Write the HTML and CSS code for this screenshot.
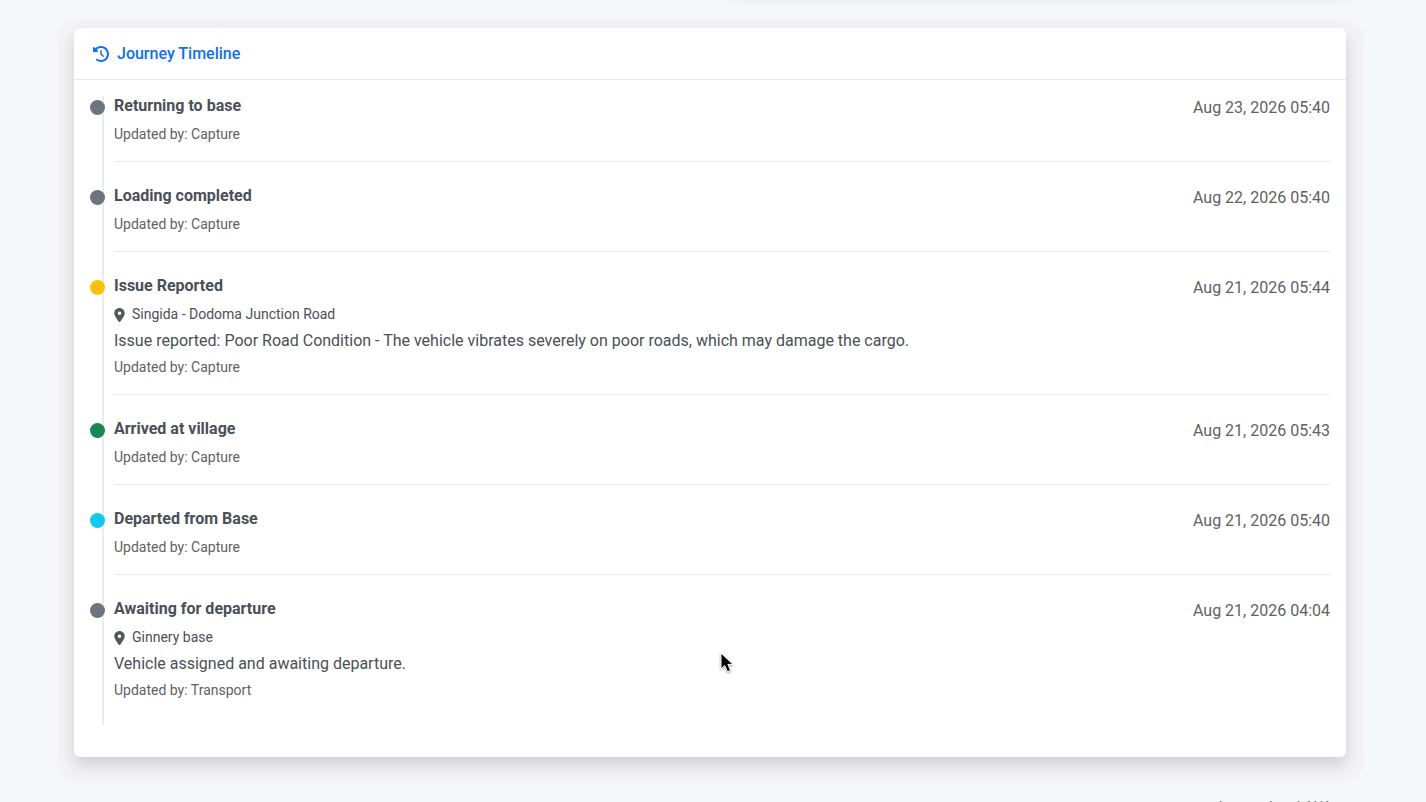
FILE: index.html
```html
<!DOCTYPE html>
<html lang="en">
  <head>
    <meta charset="utf-8" />
    <title>Journey Timeline</title>
    <link rel="stylesheet" href="styles.css">
  </head>
  <body>
    <!-- shared map pin icon -->
    <svg class="sprite" width="0" height="0" aria-hidden="true">
      <symbol id="pin" viewBox="0 0 384 512">
        <path d="M215.700 499.200C267 435 384 279.400 384 192C384 86 298 0 192 0S0 86 0 192c0 87.400 117 243 168.300 307.200c12.300 15.300 35.100 15.300 47.400 0zM192 128a64 64 0 1 1 0 128a64 64 0 1 1 0-128z" />
      </symbol>
    </svg>

    <main class="page">
      <div class="summary">
        <div></div>
        <div class="card summary-card"></div>
      </div>

      <section class="card">
        <div class="card-header">
          <svg class="icon" viewBox="0 0 512 512" aria-hidden="true">
            <path d="M75 75L41 41C25.900 25.900 0 36.600 0 57.900V168c0 13.300 10.700 24 24 24h110.100c21.400 0 32.100-25.900 17-41l-30.800-30.800C155 85.500 203 64 256 64c106 0 192 86 192 192s-86 192-192 192c-40.800 0-78.600-12.700-109.700-34.400c-14.500-10.100-34.400-6.600-44.600 7.900s-6.600 34.400 7.900 44.600C151.200 495 201.700 512 256 512c141.400 0 256-114.600 256-256S397.400 0 256 0C185.300 0 121.300 28.700 75 75zm181 53c-13.300 0-24 10.700-24 24v104c0 6.400 2.500 12.500 7 17l72 72c9.400 9.400 24.600 9.400 33.900 0s9.400-24.600 0-33.900l-65-65V152c0-13.300-10.700-24-24-24z" />
          </svg>
          <h1 class="card-title">Journey Timeline</h1>
        </div>

        <div class="card-body">
          <ul class="timeline">
            <li class="timeline-item">
              <span class="dot"></span>
              <div class="details">
                <h2 class="status">Returning to base</h2>
                <p class="small">Updated by: Capture</p>
              </div>
              <time class="date">Aug 23, 2026 05:40</time>
            </li>
            <li class="timeline-item">
              <span class="dot"></span>
              <div class="details">
                <h2 class="status">Loading completed</h2>
                <p class="small">Updated by: Capture</p>
              </div>
              <time class="date">Aug 22, 2026 05:40</time>
            </li>
            <li class="timeline-item">
              <span class="dot dot-warning"></span>
              <div class="details">
                <h2 class="status">Issue Reported</h2>
                <p class="small location"><svg class="pin"><use href="#pin" /></svg>Singida - Dodoma Junction Road</p>
                <p class="note">Issue reported: Poor Road Condition - The vehicle vibrates severely on poor roads, which may damage the cargo.</p>
                <p class="small">Updated by: Capture</p>
              </div>
              <time class="date">Aug 21, 2026 05:44</time>
            </li>
            <li class="timeline-item">
              <span class="dot dot-success"></span>
              <div class="details">
                <h2 class="status">Arrived at village</h2>
                <p class="small">Updated by: Capture</p>
              </div>
              <time class="date">Aug 21, 2026 05:43</time>
            </li>
            <li class="timeline-item">
              <span class="dot dot-info"></span>
              <div class="details">
                <h2 class="status">Departed from Base</h2>
                <p class="small">Updated by: Capture</p>
              </div>
              <time class="date">Aug 21, 2026 05:40</time>
            </li>
            <li class="timeline-item">
              <span class="dot"></span>
              <div class="details">
                <h2 class="status">Awaiting for departure</h2>
                <p class="small location"><svg class="pin"><use href="#pin" /></svg>Ginnery base</p>
                <p class="note">Vehicle assigned and awaiting departure.</p>
                <p class="small">Updated by: Transport</p>
              </div>
              <time class="date">Aug 21, 2026 04:04</time>
            </li>
          </ul>
        </div>
      </section>

      <footer class="footer small">Last updated: N/A</footer>
    </main>

    <svg class="cursor" viewBox="0 0 14 22" aria-hidden="true">
      <path d="M1 1V17L4.700 13.600L7.500 19.800L10.600 18.400L7.900 12.400H13Z" />
    </svg>
  </body>
</html>
```
FILE: styles.css
```css
* {
  box-sizing: border-box;
}

body {
  font-family: Roboto, sans-serif;
  font-size: 16px;
  line-height: 24px;
  margin: 0;
  height: 100vh;
  overflow: hidden;
  background-color: #f4f8f9;
  color: #495057;
}

h1,
h2,
p,
ul {
  margin: 0;
  padding: 0;
}

.sprite {
  display: none;
}

.page {
  display: flex;
  flex-direction: column;
  padding: 0 80px 0 74px;
  margin-top: -60px;
}

.summary {
  display: grid;
  grid-template-columns: 1fr 1fr;
  gap: 48px;
  margin-bottom: 48px;
}

.summary-card {
  height: 40px;
}

.card {
  background-color: #fff;
  border-radius: 6px;
  box-shadow: 0 8px 16px rgba(0, 0, 0, 0.15), 0 8px 0 17px #f3f3f7;
}

.card-header {
  display: flex;
  align-items: center;
  gap: 8px;
  padding: 16px 19px;
  border-bottom: 1px solid #e6e7e9;
  color: #0d6efd;
}

.icon {
  width: 16px;
  height: 16px;
  fill: currentColor;
}

.card-title {
  font-size: 16px;
  line-height: 19px;
  font-weight: 500;
}

.card-body {
  padding: 16px 16px 32px;
}

.timeline {
  position: relative;
  list-style: none;
}

.timeline::before {
  content: "";
  position: absolute;
  top: 0;
  bottom: 0;
  left: 12px;
  width: 2px;
  background-color: #e9ecef;
}

.timeline-item {
  position: relative;
  display: flex;
  justify-content: space-between;
  margin-left: 24px;
  padding-bottom: 16px;
  margin-bottom: 24px;
  border-bottom: 1px solid #e9ecef;
}

.timeline-item:last-child {
  margin-bottom: 0;
  padding-bottom: 24px;
  border-bottom: none;
}

.dot {
  position: absolute;
  top: 4px;
  left: -24px;
  width: 15px;
  height: 15px;
  border-radius: 50%;
  background-color: #6c757d;
}

.dot-warning {
  background-color: #ffc107;
}

.dot-success {
  background-color: #198754;
}

.dot-info {
  background-color: #0dcaf0;
}

.details {
  display: flex;
  flex-direction: column;
  gap: 4px;
}

.status {
  font-size: 16px;
  line-height: 20px;
  font-weight: 700;
  margin-bottom: 4px;
}

.small {
  font-size: 14px;
  line-height: 21px;
  color: #5f6163;
}

.location {
  display: flex;
  align-items: center;
  gap: 7px;
  color: #495057;
}

.pin {
  width: 11px;
  height: 14px;
  fill: #55585b;
}

.date {
  color: #5f6163;
  white-space: nowrap;
}

.footer {
  padding: 40px 14px;
  text-align: right;
}

.cursor {
  position: absolute;
  top: 652px;
  left: 720px;
  width: 14px;
  height: 22px;
  fill: #000;
  stroke: #fff;
  filter: drop-shadow(0 1px 1px rgba(0, 0, 0, 0.4));
  pointer-events: none;
}
```
